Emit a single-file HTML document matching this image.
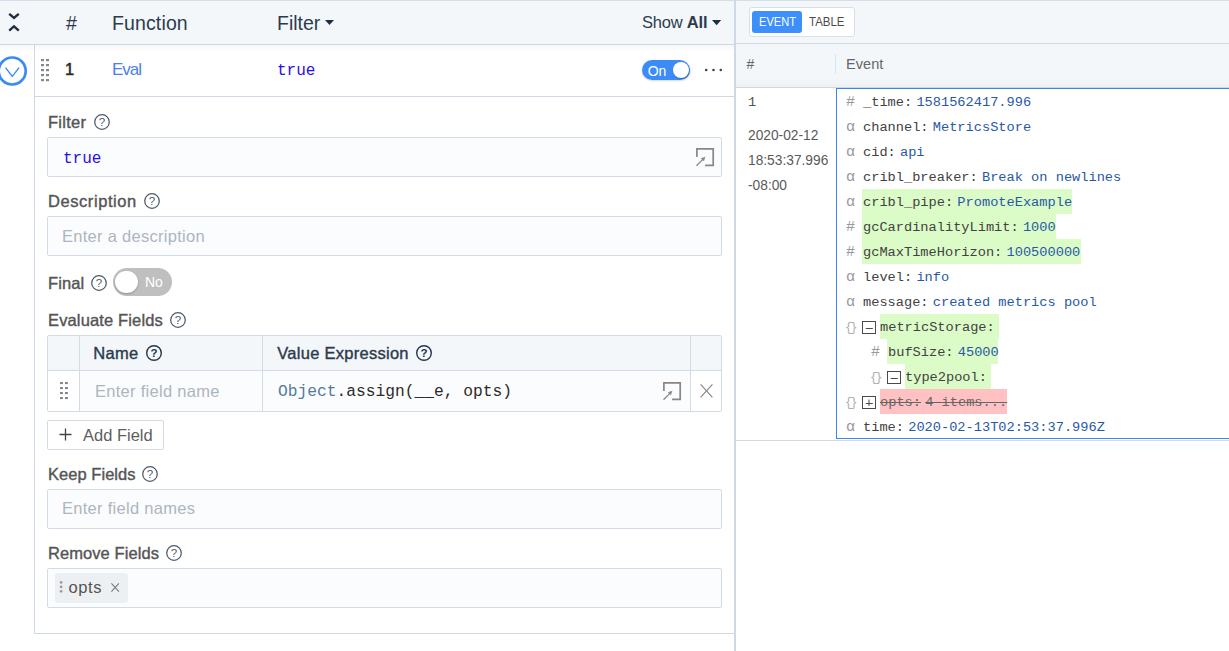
<!DOCTYPE html>
<html lang="en">
<head>
<meta charset="utf-8">
<title>Pipeline - Eval</title>
<style>
*{box-sizing:border-box;margin:0;padding:0}
html,body{width:1229px;height:651px;overflow:hidden;background:#fff}
body{font-family:"Liberation Sans",sans-serif;color:#3a4a5c;position:relative}
.abs{position:absolute}
.t{position:absolute;white-space:nowrap;line-height:1}
.mono{font-family:"Liberation Mono","DejaVu Sans Mono",monospace}
.lbl{color:#555;font-size:16.5px;letter-spacing:0.27px;-webkit-text-stroke:0.4px currentColor}
.inp{position:absolute;left:47px;width:675px;height:40px;background:#fbfcfd;border:1px solid #d3dce6;border-radius:2px}
.ph{color:#adb5c0;font-size:16.5px;letter-spacing:0.28px}
.q{position:absolute;width:16px;height:16px}
svg{display:block;overflow:visible}
/* right panel */
.ev{position:absolute;left:846px;height:25px;white-space:nowrap;font-size:13.67px;line-height:25px}
.ev .ic{color:#999;display:inline-block;width:17px;font-size:15px;line-height:1;letter-spacing:-1px}
.ev .br{font-size:12px;line-height:25px;letter-spacing:-2px;color:#adadad;position:relative;top:0px;left:-1px}
.ev .k{color:#424242}
.ev .v{color:#2859a6;margin-left:-4px}
.hl{position:absolute;height:25px;background:#dbfbc7}
.hr{position:absolute;height:25px;background:#ffc1c1}
</style>
</head>
<body>

<!-- ================= LEFT PANEL ================= -->
<!-- header -->
<div class="abs" style="left:0;top:0;width:735px;height:45px;background:#f4f7fa;border-top:1px solid #d5dee7;border-bottom:1px solid #cfd9e3"></div>
<!-- collapse chevrons -->
<svg class="abs" style="left:8px;top:11px" width="12" height="22" viewBox="0 0 12 22">
  <path d="M1.2 2.8 L6 7 L10.8 2.8" fill="none" stroke="#1d2f45" stroke-width="2.4"/>
  <path d="M1.2 19.6 L6 15.4 L10.8 19.6" fill="none" stroke="#1d2f45" stroke-width="2.4"/>
</svg>
<div class="t" style="left:66px;top:14px;font-size:19.5px;color:#2c3b4e">#</div>
<div class="t" style="left:112px;top:14px;font-size:19.5px;letter-spacing:0.13px;color:#2c3b4e">Function</div>
<div class="t" style="left:277px;top:14px;font-size:19.5px;color:#2c3b4e">Filter</div>
<svg class="abs" style="left:325px;top:20px" width="10" height="6"><path d="M0 0 H9 L4.5 5 Z" fill="#1d2f45"/></svg>
<div class="t" style="left:642px;top:14px;font-size:16.5px;letter-spacing:-0.2px;color:#2c3b4e">Show <b>All</b></div>
<svg class="abs" style="left:711.6px;top:19.8px" width="10" height="6"><path d="M0 0 H9.2 L4.6 5.3 Z" fill="#1d2f45"/></svg>

<!-- function row -->
<div class="abs" style="left:0;top:45px;width:34px;height:606px;background:#fff"></div>
<div class="abs" style="left:34px;top:45px;width:1px;height:589px;background:#cfd9e3"></div>
<div class="abs" style="left:35px;top:96px;width:700px;height:1px;background:#cfd9e3"></div>
<div class="abs" style="left:35px;top:633px;width:700px;height:1px;background:#cfd9e3"></div>
<div class="abs" style="left:0;top:45px;width:734px;height:7px;background:linear-gradient(rgba(0,0,0,.032),rgba(0,0,0,0))"></div>
<!-- expand circle -->
<svg class="abs" style="left:-3px;top:55px" width="32" height="32" viewBox="0 0 32 32">
  <circle cx="15.2" cy="16" r="13.5" fill="#fff" stroke="#3a8bf5" stroke-width="2.7"/>
  <path d="M8.5 12.6 L15.3 21.4 L22.1 12.6" fill="none" stroke="#3a8bf5" stroke-width="1.35"/>
</svg>
<!-- drag handle -->
<svg class="abs" style="left:41px;top:58.8px" width="8" height="23" viewBox="0 0 8 23"><g fill="#85888b"><rect x="0" y="0" width="3" height="2.2"/><rect x="5" y="0" width="3" height="2.2"/><rect x="0" y="5" width="3" height="2.2"/><rect x="5" y="5" width="3" height="2.2"/><rect x="0" y="10" width="3" height="2.2"/><rect x="5" y="10" width="3" height="2.2"/><rect x="0" y="15" width="3" height="2.2"/><rect x="5" y="15" width="3" height="2.2"/><rect x="0" y="20" width="3" height="2.2"/><rect x="5" y="20" width="3" height="2.2"/></g></svg>
<div class="t" style="left:65px;top:61px;font-size:16.5px;-webkit-text-stroke:0.55px #2b2b2b;color:#2b2b2b">1</div>
<div class="t" style="left:112px;top:61px;font-size:17px;letter-spacing:-1px;color:#4a80ee">Eval</div>
<div class="t mono" style="left:277px;top:63px;font-size:16px;color:#2a10e8">true</div>
<!-- On toggle -->
<div class="abs" style="left:642px;top:60px;width:48px;height:20px;border-radius:10px;background:#3c8cf8;box-shadow:0 1px 2px rgba(0,0,0,.15)"></div>
<div class="abs" style="left:673px;top:62px;width:16px;height:16px;border-radius:8px;background:#fff;box-shadow:1px 1px 2px rgba(0,30,90,.35)"></div>
<div class="t" style="left:647.7px;top:63.7px;font-size:14px;color:#fff">On</div>
<!-- more dots -->
<svg class="abs" style="left:704px;top:67px" width="20" height="6" viewBox="0 0 20 6"><circle cx="2.2" cy="3" r="1.3" fill="#444"/><circle cx="9.5" cy="3" r="1.3" fill="#444"/><circle cx="16.8" cy="3" r="1.3" fill="#444"/></svg>

<!-- Filter -->
<div class="t lbl" style="left:48px;top:114px">Filter</div>
<svg class="q" style="left:94px;top:114px" viewBox="0 0 16 16"><circle cx="8" cy="8" r="7.3" fill="none" stroke="#4d5a68" stroke-width="1.25"/><text x="8" y="12" text-anchor="middle" font-size="11.5" fill="#4d5a68" font-family="Liberation Sans, sans-serif">?</text></svg>
<div class="inp" style="top:137px"></div>
<div class="t mono" style="left:63px;top:150.5px;font-size:16px;color:#2a10e8">true</div>
<svg class="abs" style="left:696px;top:147.7px" width="19" height="19" viewBox="0 0 19 19">
  <path d="M0.9 9 V0.9 H17.2 V17.4 H9.1" fill="none" stroke="#8a8586" stroke-width="1.7"/>
  <path d="M0.5 17.7 L7.6 10.6" fill="none" stroke="#8a8586" stroke-width="1.25"/>
  <path d="M9.4 8.8 L4.9 10.3 L7.9 13.3 Z" fill="#8a8586"/>
</svg>

<!-- Description -->
<div class="t lbl" style="left:48px;top:193px;letter-spacing:0.57px">Description</div>
<svg class="q" style="left:144px;top:193px" viewBox="0 0 16 16"><circle cx="8" cy="8" r="7.3" fill="none" stroke="#4d5a68" stroke-width="1.25"/><text x="8" y="12" text-anchor="middle" font-size="11.5" fill="#4d5a68" font-family="Liberation Sans, sans-serif">?</text></svg>
<div class="inp" style="top:216px"></div>
<div class="t ph" style="left:62px;top:228px">Enter a description</div>

<!-- Final -->
<div class="t lbl" style="left:48px;top:275px;letter-spacing:0.07px">Final</div>
<svg class="q" style="left:91px;top:275px" viewBox="0 0 16 16"><circle cx="8" cy="8" r="7.3" fill="none" stroke="#4d5a68" stroke-width="1.25"/><text x="8" y="12" text-anchor="middle" font-size="11.5" fill="#4d5a68" font-family="Liberation Sans, sans-serif">?</text></svg>
<div class="abs" style="left:113px;top:268px;width:59px;height:28px;border-radius:14px;background:#bfbfbf"></div>
<div class="abs" style="left:115.3px;top:270.6px;width:22.5px;height:22.5px;border-radius:12px;background:#fff;box-shadow:0 1px 2px rgba(0,0,0,.25)"></div>
<div class="t" style="left:145px;top:275px;font-size:14px;color:#fff">No</div>

<!-- Evaluate Fields -->
<div class="t lbl" style="left:48px;top:312px;letter-spacing:0.14px">Evaluate Fields</div>
<svg class="q" style="left:170px;top:312px" viewBox="0 0 16 16"><circle cx="8" cy="8" r="7.3" fill="none" stroke="#4d5a68" stroke-width="1.25"/><text x="8" y="12" text-anchor="middle" font-size="11.5" fill="#4d5a68" font-family="Liberation Sans, sans-serif">?</text></svg>
<div class="abs" style="left:47px;top:335px;width:675px;height:77px;background:#fbfcfd;border:1px solid #d3dce6;border-radius:2px"></div>
<div class="abs" style="left:48px;top:336px;width:673px;height:35px;background:#f4f7fa"></div>
<div class="abs" style="left:48px;top:371px;width:31px;height:40px;background:#fff;border-bottom-left-radius:2px"></div>
<div class="abs" style="left:691px;top:371px;width:30px;height:40px;background:#fff;border-bottom-right-radius:2px"></div>
<div class="abs" style="left:48px;top:370px;width:673px;height:1px;background:#d3dce6"></div>
<div class="abs" style="left:79px;top:336px;width:1px;height:75px;background:#d3dce6"></div>
<div class="abs" style="left:262px;top:336px;width:1px;height:75px;background:#d3dce6"></div>
<div class="abs" style="left:690px;top:336px;width:1px;height:75px;background:#d3dce6"></div>
<div class="t lbl" style="left:93.3px;top:345px;color:#2c3b4e">Name</div>
<svg class="q" style="left:146px;top:345px" viewBox="0 0 16 16"><circle cx="8" cy="8" r="7.3" fill="none" stroke="#26354a" stroke-width="1.4"/><text x="8" y="12" text-anchor="middle" font-size="11.5" fill="#26354a" font-weight="bold" font-family="Liberation Sans, sans-serif">?</text></svg>
<div class="t lbl" style="left:277.3px;top:345px;color:#2c3b4e">Value Expression</div>
<svg class="q" style="left:416px;top:345px" viewBox="0 0 16 16"><circle cx="8" cy="8" r="7.3" fill="none" stroke="#26354a" stroke-width="1.4"/><text x="8" y="12" text-anchor="middle" font-size="11.5" fill="#26354a" font-weight="bold" font-family="Liberation Sans, sans-serif">?</text></svg>
<!-- row drag -->
<svg class="abs" style="left:60px;top:382px" width="8" height="18" viewBox="0 0 8 18"><g fill="#85888b"><rect x="0" y="0" width="2.9" height="2.1"/><rect x="5" y="0" width="2.9" height="2.1"/><rect x="0" y="5" width="2.9" height="2.1"/><rect x="5" y="5" width="2.9" height="2.1"/><rect x="0" y="10" width="2.9" height="2.1"/><rect x="5" y="10" width="2.9" height="2.1"/><rect x="0" y="15" width="2.9" height="2.1"/><rect x="5" y="15" width="2.9" height="2.1"/></g></svg>
<div class="t ph" style="left:95px;top:383px">Enter field name</div>
<div class="t mono" style="left:278px;top:384px;font-size:16.25px;color:#2b2b2b"><span style="color:#557b98">Object</span>.assign(__e, opts)</div>
<svg class="abs" style="left:663px;top:381.7px" width="19" height="19" viewBox="0 0 19 19">
  <path d="M0.9 9 V0.9 H17.2 V17.4 H9.1" fill="none" stroke="#8a8586" stroke-width="1.7"/>
  <path d="M0.5 17.7 L7.6 10.6" fill="none" stroke="#8a8586" stroke-width="1.25"/>
  <path d="M9.4 8.8 L4.9 10.3 L7.9 13.3 Z" fill="#8a8586"/>
</svg>
<svg class="abs" style="left:699.5px;top:384.3px" width="13" height="14" viewBox="0 0 13 14"><path d="M0.6 0.3 L12.4 13.3 M12.4 0.3 L0.6 13.3" stroke="#8a8586" stroke-width="1.15" fill="none"/></svg>

<!-- Add Field -->
<div class="abs" style="left:47px;top:420px;width:117px;height:30px;background:#fff;border:1px solid #d3dce6;border-radius:2px"></div>
<svg class="abs" style="left:59px;top:428px" width="13" height="13" viewBox="0 0 13 13"><path d="M6.5 0.5 V12.5 M0.5 6.5 H12.5" stroke="#444" stroke-width="1.3"/></svg>
<div class="t" style="left:83px;top:427px;font-size:16.5px;color:#5e5e5e">Add Field</div>

<!-- Keep Fields -->
<div class="t lbl" style="left:48px;top:466px;letter-spacing:0.04px">Keep Fields</div>
<svg class="q" style="left:142px;top:466px" viewBox="0 0 16 16"><circle cx="8" cy="8" r="7.3" fill="none" stroke="#4d5a68" stroke-width="1.25"/><text x="8" y="12" text-anchor="middle" font-size="11.5" fill="#4d5a68" font-family="Liberation Sans, sans-serif">?</text></svg>
<div class="inp" style="top:489px"></div>
<div class="t ph" style="left:62px;top:500px">Enter field names</div>

<!-- Remove Fields -->
<div class="t lbl" style="left:48px;top:545px;letter-spacing:0.07px">Remove Fields</div>
<svg class="q" style="left:166px;top:545px" viewBox="0 0 16 16"><circle cx="8" cy="8" r="7.3" fill="none" stroke="#4d5a68" stroke-width="1.25"/><text x="8" y="12" text-anchor="middle" font-size="11.5" fill="#4d5a68" font-family="Liberation Sans, sans-serif">?</text></svg>
<div class="inp" style="top:568px"></div>
<div class="abs" style="left:55px;top:573px;width:73px;height:30px;background:#edf0f3;border-radius:3px"></div>
<svg class="abs" style="left:59px;top:580px" width="5" height="14" viewBox="0 0 5 14"><circle cx="2.1" cy="2.4" r="1.35" fill="#9c9c9c"/><circle cx="2.1" cy="6.9" r="1.35" fill="#9c9c9c"/><circle cx="2.1" cy="11.3" r="1.35" fill="#9c9c9c"/></svg>
<div class="t" style="left:68.6px;top:579px;font-size:16.5px;letter-spacing:0.55px;color:#555">opts</div>
<svg class="abs" style="left:111px;top:582.6px" width="9" height="9" viewBox="0 0 9 9"><path d="M0.4 0.3 L7.9 8.6 M7.9 0.3 L0.4 8.6" stroke="#777" stroke-width="1.05"/></svg>

<!-- ================= DIVIDER ================= -->
<div class="abs" style="left:734px;top:0;width:2px;height:651px;background:#cfd9e3"></div>

<!-- ================= RIGHT PANEL ================= -->
<div class="abs" style="left:736px;top:0;width:493px;height:44px;background:#f4f7fa;border-top:1px solid #d5dee7;border-bottom:1px solid #cfd9e3"></div>
<div class="abs" style="left:749px;top:7px;width:106px;height:30px;background:#fff;border:1px solid #d9dfe6;border-radius:3px"></div>
<div class="abs" style="left:752px;top:11px;width:50px;height:22px;background:#3d8ffa;border-radius:3px"></div>
<div class="t" style="left:759.3px;top:15.5px;font-size:12.7px;transform:scaleX(0.875);transform-origin:0 0;color:#fff">EVENT</div>
<div class="t" style="left:809px;top:15.5px;font-size:12.7px;transform:scaleX(0.905);transform-origin:0 0;color:#4a4a4a">TABLE</div>

<div class="abs" style="left:736px;top:44px;width:493px;height:44px;background:linear-gradient(#f4f7fa 0,#f4f7fa 36px,#eef1f4 43px);border-bottom:1px solid #cfd9e3"></div>
<div class="t" style="left:746.5px;top:57px;font-size:14px;color:#666">#</div>
<div class="abs" style="left:835px;top:54px;width:1px;height:20px;background:#dfe5ec"></div>
<div class="t" style="left:846px;top:57px;font-size:14.6px;color:#63676c">Event</div>

<div class="t" style="left:748px;top:96px;font-size:13.67px;color:#555;font-family:'Liberation Mono',monospace">1</div>
<div class="t" style="left:747.6px;top:127.5px;font-size:14.3px;transform:scaleX(0.962);transform-origin:0 0;color:#5a5a5a">2020-02-12</div>
<div class="t" style="left:747.6px;top:152.5px;font-size:14.3px;transform:scaleX(0.962);transform-origin:0 0;color:#5a5a5a">18:53:37.996</div>
<div class="t" style="left:747.6px;top:177.5px;font-size:14.3px;transform:scaleX(0.962);transform-origin:0 0;color:#5a5a5a">-08:00</div>

<div class="abs" style="left:836px;top:88px;width:400px;height:351px;border:1px solid #3c84ee;background:#fff"></div>
<div class="abs" style="left:736px;top:440px;width:493px;height:1px;background:#cfd9e3"></div>

<div class="hl" style="left:862px;top:189px;width:210px"></div>
<div class="hl" style="left:862px;top:214px;width:194px"></div>
<div class="hl" style="left:862px;top:239px;width:219px"></div>
<div class="hl" style="left:880px;top:314px;width:119px"></div>
<div class="hl" style="left:887px;top:339px;width:111px"></div>
<div class="hl" style="left:905px;top:364px;width:86px"></div>
<div class="hr" style="left:880px;top:389px;width:127px"></div>

<div class="ev mono" style="top:90px"><span class="ic">#</span><span class="k">_time:</span> <span class="v">1581562417.996</span></div>
<div class="ev mono" style="top:115px"><span class="ic">α</span><span class="k">channel:</span> <span class="v">MetricsStore</span></div>
<div class="ev mono" style="top:140px"><span class="ic">α</span><span class="k">cid:</span> <span class="v">api</span></div>
<div class="ev mono" style="top:165px"><span class="ic">α</span><span class="k">cribl_breaker:</span> <span class="v">Break on newlines</span></div>
<div class="ev mono" style="top:190px"><span class="ic">α</span><span class="k">cribl_pipe:</span> <span class="v">PromoteExample</span></div>
<div class="ev mono" style="top:215px"><span class="ic">#</span><span class="k">gcCardinalityLimit:</span> <span class="v">1000</span></div>
<div class="ev mono" style="top:240px"><span class="ic">#</span><span class="k">gcMaxTimeHorizon:</span> <span class="v">100500000</span></div>
<div class="ev mono" style="top:265px"><span class="ic">α</span><span class="k">level:</span> <span class="v">info</span></div>
<div class="ev mono" style="top:290px"><span class="ic">α</span><span class="k">message:</span> <span class="v">created metrics pool</span></div>
<div class="ev mono" style="top:315px"><span class="ic br">{}</span><span class="k" style="margin-left:17px">metricStorage:</span></div>
<div class="ev mono" style="top:340px;left:871px"><span class="ic">#</span><span class="k">bufSize:</span> <span class="v">45000</span></div>
<div class="ev mono" style="top:365px;left:871px"><span class="ic br">{}</span><span class="k" style="margin-left:17px">type2pool:</span></div>
<div class="ev mono" style="top:390px"><span class="ic br">{}</span><span class="k" style="margin-left:17px;text-decoration:line-through;color:#666">opts:</span> <span class="v" style="text-decoration:line-through;color:#666">4 items...</span></div>
<div class="ev mono" style="top:415px"><span class="ic">α</span><span class="k">time:</span> <span class="v">2020-02-13T02:53:37.996Z</span></div>

<!-- tree toggles -->
<svg class="abs" style="left:862px;top:321px" width="14" height="13" viewBox="0 0 14 13"><rect x="0.5" y="0.5" width="13" height="12" fill="#fff" stroke="#4a4a4a" stroke-width="1"/><path d="M3.8 7.5 H10.8" stroke="#4a4a4a" stroke-width="1" fill="none"/></svg>
<svg class="abs" style="left:887px;top:371px" width="14" height="13" viewBox="0 0 14 13"><rect x="0.5" y="0.5" width="13" height="12" fill="#fff" stroke="#4a4a4a" stroke-width="1"/><path d="M3.8 7.5 H10.8" stroke="#4a4a4a" stroke-width="1" fill="none"/></svg>
<svg class="abs" style="left:862px;top:396px" width="14" height="13" viewBox="0 0 14 13"><rect x="0.5" y="0.5" width="13" height="12" fill="#fff" stroke="#4a4a4a" stroke-width="1"/><path d="M3.8 7.5 H10.8 M7 3.5 V10" stroke="#4a4a4a" stroke-width="1" fill="none"/></svg>

</body>
</html>
